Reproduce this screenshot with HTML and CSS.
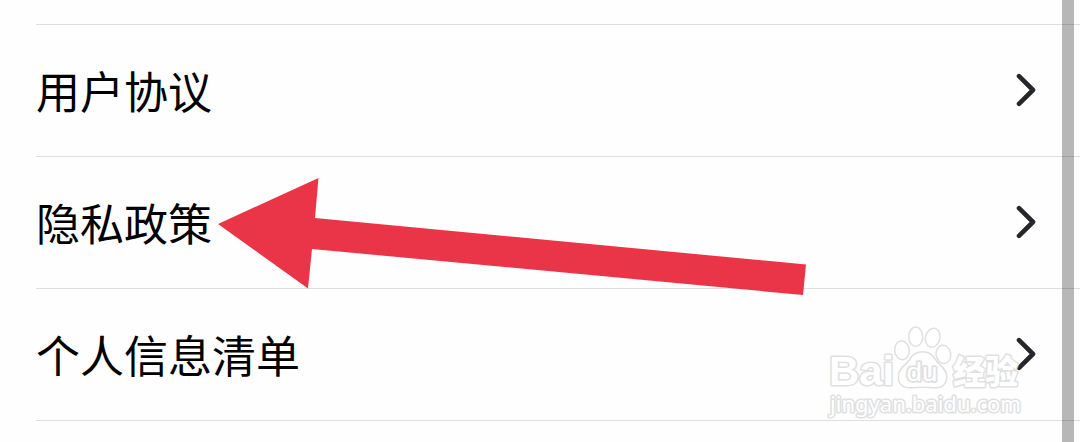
FILE: index.html
```html
<!DOCTYPE html>
<html lang="zh-CN">
    <head>
        <meta charset="UTF-8">
        <meta name="viewport" content="width=device-width, initial-scale=1.0">
        <title>隐私政策</title>
        <link rel="stylesheet" href="styles.css">
    </head>
    <body>
        <div class="page">
            <ul class="menu">
                <li class="row">
                    <span class="label">用户协议</span>
                    <svg class="chevron" viewBox="0 0 24 36"><path d="M5 4.2 19 18 5 31.8"/></svg>
                </li>
                <li class="row">
                    <span class="label">隐私政策</span>
                    <svg class="chevron" viewBox="0 0 24 36"><path d="M5 4.2 19 18 5 31.8"/></svg>
                </li>
                <li class="row">
                    <span class="label">个人信息清单</span>
                    <svg class="chevron" viewBox="0 0 24 36"><path d="M5 4.2 19 18 5 31.8"/></svg>
                </li>
            </ul>

            <svg class="arrow" viewBox="0 0 590 120">
                <polygon points="0,49 100.500,3 97,43 588,89.500 585,120 94,74 90,113.500"/>
            </svg>

            <svg class="watermark" viewBox="0 0 200 100">
                <g class="paw">
                    <ellipse cx="77" cy="30.3" rx="7.3" ry="9.4" transform="rotate(-6 77 30.3)"/>
                    <ellipse cx="90.7" cy="16.8" rx="7" ry="9.7"/>
                    <ellipse cx="107.7" cy="17.7" rx="7.2" ry="9.6" transform="rotate(14 107.7 17.7)"/>
                    <ellipse cx="118.4" cy="34.4" rx="7.3" ry="9.2" transform="rotate(-8 118.4 34.4)"/>
                    <path d="M97.500 31.700c6.500 0 10.500 3.300 13 8 3 5.300 11.200 8 11.200 17.300 0 7-4.500 10.800-10.700 10.800-5 0-8.500-.5-13.500-.5s-8.500.5-13.500.5c-6.200 0-10.700-3.800-10.700-10.800 0-9.300 8.200-12 11.200-17.300 2.500-4.700 6.500-8 13-8z"/>
                </g>
                <text class="brand" x="4" y="65" textLength="65" lengthAdjust="spacingAndGlyphs">Bai</text>
                <text class="du" x="81.500" y="60.500" textLength="31" lengthAdjust="spacingAndGlyphs">du</text>
                <text class="exp" x="128" y="64" textLength="65" lengthAdjust="spacingAndGlyphs">经验</text>
                <text class="site" x="5" y="91.500" textLength="191" lengthAdjust="spacingAndGlyphs">jingyan.baidu.com</text>
            </svg>

            <div class="scrollbar"></div>
        </div>
    </body>
</html>
```
FILE: styles.css
```css
body {
    margin: 0;
    background: #fefefe;
    font-family: "Noto Sans CJK SC", sans-serif;
    color: #000;
}

.page {
    position: relative;
    height: 442px;
    overflow: hidden;
}

.menu {
    list-style: none;
    margin: 24px 0 0 36px;
    padding: 0;
    border-top: 1px solid #dedede;
    display: flow-root;
}

.row {
    display: flex;
    align-items: center;
    justify-content: space-between;
    box-sizing: border-box;
    height: 132px;
    padding: 0 42px 2px 0;
    border-bottom: 1px solid #dedede;
}

.label {
    font-size: 44px;
    line-height: 64px;
}

.chevron {
    width: 24px;
    height: 36px;
}

.chevron path {
    fill: none;
    stroke: #25272b;
    stroke-width: 4.6;
    stroke-linecap: round;
    stroke-linejoin: round;
}

/* red pointer lying over the list */
.arrow {
    position: absolute;
    left: 218px;
    top: 175px;
    width: 590px;
    height: 120px;
    overflow: visible;
    fill: #ea3549;
}

.watermark {
    position: absolute;
    left: 825px;
    top: 320px;
    width: 200px;
    height: 100px;
    overflow: visible;
    fill: #fff;
    stroke: #e0e0e0;
    stroke-width: 1.5;
}

.watermark text {
    paint-order: stroke;
    stroke-width: 3;
    stroke-linejoin: round;
}

.brand {
    font: bold 40px "Liberation Sans", sans-serif;
}

.watermark .du {
    font: 26px "Liberation Sans", sans-serif;
    stroke-width: 3.4;
}

.exp {
    font: 900 33px "Noto Sans CJK SC", sans-serif;
}

.site {
    font: 21px "Noto Sans", sans-serif;
}

.scrollbar {
    position: absolute;
    left: 1062px;
    top: 0;
    width: 12px;
    height: 442px;
    background: rgba(0, 0, 0, 0.28);
}
```
